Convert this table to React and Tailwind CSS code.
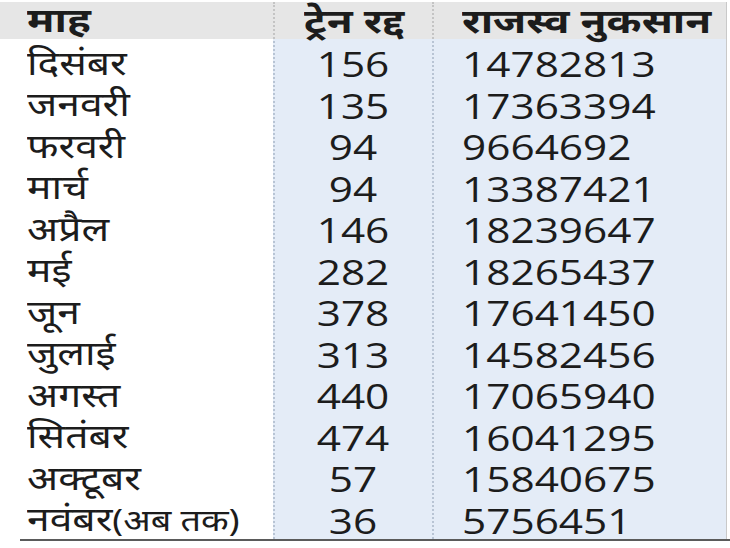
const ROWS = [
  ['दिसंबर', '156', '14782813'],
  ['जनवरी', '135', '17363394'],
  ['फरवरी', '94', '9664692'],
  ['मार्च', '94', '13387421'],
  ['अप्रैल', '146', '18239647'],
  ['मई', '282', '18265437'],
  ['जून', '378', '17641450'],
  ['जुलाई', '313', '14582456'],
  ['अगस्त', '440', '17065940'],
  ['सितंबर', '474', '16041295'],
  ['अक्टूबर', '57', '15840675'],
  ['नवंबर', '36', '5756451', '(अब तक)'],
];

const hindi = 'font-["Noto_Sans","Noto_Sans_Devanagari",sans-serif]';
const digits = 'font-["Open_Sans",sans-serif] text-[35px] leading-none inline-block scale-x-[1.21]';
const head = `${hindi} text-[33px] font-bold leading-none inline-block scale-x-[1.28]`;

export default function App() {
  return (
    <div className="w-[730px] h-[548px] bg-white pt-[2px] text-[#1c1c1c] overflow-hidden">
      <div className="w-[727px] border-r border-[#c9c9c9]">
        <div className="grid grid-cols-[273px_159px_1fr] h-[37px] bg-[#e6e6e6] items-center">
          <div className="pl-[27px]">
            <span className={`${head} origin-left`}>माह</span>
          </div>
          <div className="h-full flex items-center justify-center border-l-2 border-dotted border-[#c4c4c4]">
            <span className={`${head} origin-center`}>ट्रेन रद्द</span>
          </div>
          <div className="h-full flex items-center pl-[28px] border-l-2 border-dotted border-[#c4c4c4]">
            <span className={`${head} origin-left`}>राजस्व नुकसान</span>
          </div>
        </div>
        <div className="grid grid-cols-[273px_159px_1fr] pt-[2px] bg-[linear-gradient(to_right,white_273px,#e4ecf7_273px)]">
          <div className="flex flex-col bg-white">
            {ROWS.map(r => (
              <div key={r[0]} className="h-[41.5px] flex items-center pl-[27px]">
                <span className={`${hindi} text-[34px] leading-none inline-block origin-left scale-x-[1.2] whitespace-nowrap`}>
                  {r[0]}
                  {r[3] && <span className="text-[30px]">{r[3]}</span>}
                </span>
              </div>
            ))}
          </div>
          <div className="flex flex-col border-l-2 border-dotted border-[#b8c4d4]">
            {ROWS.map(r => (
              <div key={r[0]} className="h-[41.5px] flex items-center justify-center pt-[4px]">
                <span className={`${digits} origin-center`}>{r[1]}</span>
              </div>
            ))}
          </div>
          <div className="flex flex-col border-l-2 border-dotted border-[#b8c4d4]">
            {ROWS.map(r => (
              <div key={r[0]} className="h-[41.5px] flex items-center pl-[28px] pt-[4px]">
                <span className={`${digits} origin-left`}>{r[2]}</span>
              </div>
            ))}
          </div>
        </div>
      </div>
      <div className="ml-[20px] h-[2px] bg-[#5a5a5a]" />
    </div>
  );
}
